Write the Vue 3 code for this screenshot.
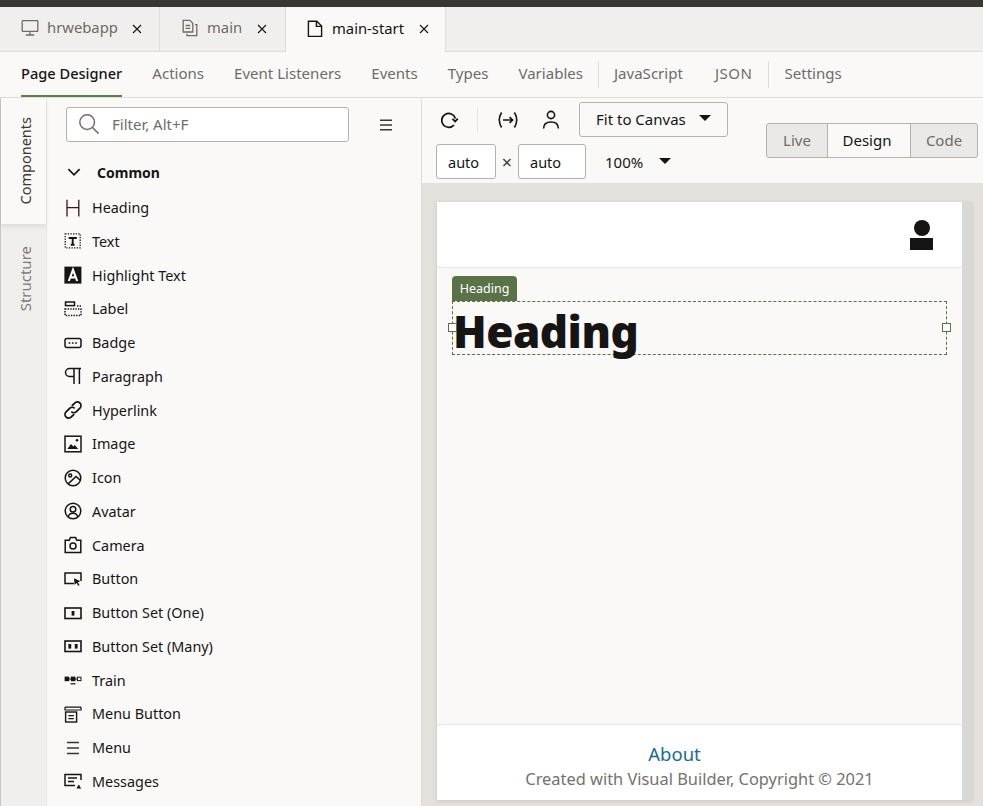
<template>
  <div class="app">
    <div class="top-strip"></div>

    <div class="tabs">
      <div v-for="tab in tabs" :key="tab.name" class="tab" :class="{ active: tab.active }" :style="{ width: tab.width + 'px' }">
        <svg v-if="tab.icon === 'desktop'" class="tab-icon" viewBox="0 0 18 18" fill="none" stroke="currentColor" stroke-width="1.3">
          <rect x="1.2" y="1.7" width="15.6" height="10.6" rx="0.6" />
          <path d="M9 12.5v3.4M4.8 16h8.4" />
        </svg>
        <svg v-else-if="tab.icon === 'pages'" class="tab-icon" viewBox="0 0 18 18" fill="none" stroke="currentColor" stroke-width="1.3">
          <path d="M2.2 13V1.3h6.6l3 3V13z" />
          <path d="M4.6 6.5h4.6M4.6 9.3h4.6" />
          <path d="M14 5.6h1.8v11H6v-1.8" />
        </svg>
        <svg v-else class="tab-icon" viewBox="0 0 18 18" fill="none" stroke="#161513" stroke-width="1.4">
          <path d="M2.4 16.4V1.2h8.4l4.8 4.8v10.4z" />
          <path d="M10.4 1.2v5.2h5.2" />
        </svg>
        <span class="tab-name">{{ tab.name }}</span>
        <svg class="tab-close" viewBox="0 0 10 10" stroke="#161513" stroke-width="1.1"><path d="M1 1l8 8M9 1l-8 8" /></svg>
      </div>
      <div class="tabs-rest"></div>
    </div>

    <nav class="subnav">
      <template v-for="item in navItems" :key="item.label">
        <span v-if="item.sep" class="nav-sep"></span>
        <span class="nav-item" :class="{ current: item.current, caps: item.caps }">{{ item.label }}</span>
      </template>
    </nav>

    <div class="workspace">
      <aside class="rail">
        <div class="rail-tab on"><span>Components</span></div>
        <div class="rail-tab"><span>Structure</span></div>
      </aside>

      <section class="palette">
        <div class="filter-row">
          <div class="filter">
            <svg class="search-icon" viewBox="0 0 24 24" fill="none" stroke="#6f6b66" stroke-width="1.6">
              <circle cx="10" cy="10" r="8" />
              <path d="M16 16l6.5 6.5" />
            </svg>
            <span>Filter, Alt+F</span>
          </div>
          <svg class="list-icon" viewBox="0 0 12 12" stroke="#3a3632" stroke-width="1.4"><path d="M0 1.2h12M0 6h12M0 10.8h12" /></svg>
        </div>
        <div class="group-title">
          <svg viewBox="0 0 12 8" fill="none" stroke="#161513" stroke-width="1.5"><path d="M1 1l5 5 5-5" /></svg>
          <span>Common</span>
        </div>
        <ul class="items">
          <li v-for="c in components" :key="c.name">
            <svg class="item-icon" viewBox="0 0 18 18" fill="none" stroke="#161513" stroke-width="1.5" v-html="c.svg"></svg>
            <span>{{ c.name }}</span>
          </li>
        </ul>
      </section>

      <section class="designer">
        <div class="toolbar">
          <div class="tool-lines">
            <div class="tool-row">
              <svg class="tool" viewBox="0 0 20 20" fill="none" stroke="#161513" stroke-width="1.8">
                <path d="M16.4 8.4A7 7 0 1 0 15 15" />
                <path d="M18.8 8.6l-2.6 2.8-2.8-2.6" />
              </svg>
              <span class="tool-sep"></span>
              <svg class="tool wide" viewBox="0 0 22 20" fill="none" stroke="#161513" stroke-width="1.6">
                <path d="M4.6 2.5C1.8 7 1.8 13 4.6 17.5M17.4 2.5c2.8 4.5 2.8 10.5 0 15" />
                <path d="M6 10h9.5M12.6 7.2l3 2.8-3 2.8" />
              </svg>
              <svg class="tool person" viewBox="0 0 20 20" fill="none" stroke="#161513" stroke-width="1.6">
                <circle cx="10" cy="5" r="3.6" />
                <path d="M2.6 18.6c0-4.4 3-6.6 7.4-6.6s7.4 2.2 7.4 6.6" />
              </svg>
              <div class="fit-btn">Fit to Canvas<i class="caret"></i></div>
            </div>
            <div class="tool-row second">
              <div class="size-box first">auto</div>
              <span class="times">×</span>
              <div class="size-box">auto</div>
              <span class="zoom">100%</span><i class="caret"></i>
            </div>
          </div>
          <div class="modes">
            <span class="mode">Live</span>
            <span class="mode on">Design</span>
            <span class="mode">Code</span>
          </div>
        </div>

        <div class="canvas">
          <div class="page-wrap">
            <div class="page">
              <header class="page-head">
                <div class="avatar"><b></b><i></i></div>
              </header>
              <main class="page-body">
                <div class="sel-tag">Heading</div>
                <div class="sel-box">
                  <h1>Heading</h1>
                  <i class="handle left"></i>
                  <i class="handle right"></i>
                </div>
              </main>
              <footer class="page-foot">
                <div class="about">About</div>
                <div class="copy">Created with Visual Builder, Copyright © 2021</div>
              </footer>
            </div>
            <div class="page-scroll"></div>
          </div>
        </div>
      </section>
    </div>
  </div>
</template>

<script setup>
const tabs = [
  { name: "hrwebapp", icon: "desktop", width: 160 },
  { name: "main", icon: "pages", width: 126 },
  { name: "main-start", icon: "file", width: 160, active: true },
];

const navItems = [
  { label: "Page Designer", current: true },
  { label: "Actions" },
  { label: "Event Listeners" },
  { label: "Events" },
  { label: "Types" },
  { label: "Variables" },
  { label: "JavaScript", sep: true },
  { label: "JSON", caps: true },
  { label: "Settings", sep: true },
];

const components = [
  { name: "Heading", svg: '<path d="M3 .8v16.6M14.8 .8v16.6M3 8.6h11.8" stroke="#3a1513" stroke-width="1.3"/>' },
  { name: "Text", svg: '<rect x="1.2" y="1.8" width="15" height="14" stroke-dasharray="1.3 1.3" stroke-width="1.3"/><path d="M4.6 6h8.2M8.7 6v6.8M6.8 12.8h3.8" stroke-width="1.9"/>' },
  { name: "Highlight Text", svg: '<rect x=".4" y=".6" width="17" height="17" fill="#161513" stroke="none"/><path d="M4.8 15L9 3.8 13.2 15M6.2 11.4h5.6" stroke="#fff" stroke-width="2.1"/>' },
  { name: "Label", svg: '<rect x="1.5" y="2" width="9" height="3.6"/><rect x="1" y="9" width="16" height="6.5" stroke-dasharray="1.4 1.2"/><path d="M13 6h4" stroke-dasharray="1.4 1.2"/>' },
  { name: "Badge", svg: '<rect x="1" y="4.5" width="16" height="9" rx="2"/><path d="M4.6 9h9" stroke-dasharray="1.7 1.6"/>' },
  { name: "Paragraph", svg: '<path d="M10 1.5H5.5a4 4 0 0 0 0 8H10M10 1.5V17M15.4 1.5V17M9 1.5h8"/>' },
  { name: "Hyperlink", svg: '<g transform="translate(9 9) scale(1.2) translate(-9 -9)"><path d="M8 5.6l2.4-2.4a3 3 0 0 1 4.4 4.2l-3 3a3 3 0 0 1-4.2 0"/><path d="M10 12.4l-2.4 2.4a3 3 0 0 1-4.4-4.2l3-3a3 3 0 0 1 4.2 0"/></g>' },
  { name: "Image", svg: '<rect x="1" y="1.2" width="16" height="15.6"/><path d="M3.4 14l3.6-5 2.3 2.6 1.5-1.6 3.4 4z" fill="#161513" stroke="none"/><circle cx="13" cy="5.2" r="1.3" fill="#161513" stroke="none"/>' },
  { name: "Icon", svg: '<circle cx="9" cy="9" r="7.8"/><circle cx="6.2" cy="6.6" r="1.5"/><path d="M4.4 14.6L12 7.4l4.4 4"/>' },
  { name: "Avatar", svg: '<circle cx="9" cy="9" r="7.8"/><circle cx="9" cy="7.2" r="2.8"/><path d="M4.2 15c.6-2.6 2.4-3.8 4.8-3.8s4.2 1.2 4.8 3.8"/>' },
  { name: "Camera", svg: '<path d="M1.2 16.6V4.2h4l1.2-2.6h5.2l1.2 2.6h4v12.4z"/><circle cx="9" cy="10" r="3"/>' },
  { name: "Button", svg: '<path d="M10 13.5H1V3h16v8"/><path d="M10 8.2l6.4 3-2.6 1 1.8 3-1.4.6-1.6-2.8-2 1.8z" fill="#161513" stroke="none"/>' },
  { name: "Button Set (One)", svg: '<rect x="1" y="4" width="16" height="10.5" stroke-width="1.6"/><rect x="7.6" y="7" width="2.8" height="4.6" fill="#161513" stroke="none"/>' },
  { name: "Button Set (Many)", svg: '<rect x="1" y="4" width="16" height="10.5" stroke-width="1.6"/><rect x="4.4" y="7" width="2.8" height="4.6" fill="#161513" stroke="none"/><rect x="10.8" y="7" width="2.8" height="4.6" fill="#161513" stroke="none"/>' },
  { name: "Train", svg: '<rect x=".6" y="5.6" width="4.6" height="4.6" fill="#161513" stroke="none"/><rect x="6.8" y="5.6" width="4.6" height="4.6" fill="#161513" stroke="none"/><rect x="13.4" y="6.2" width="3.6" height="3.4" stroke-width="1"/><path d="M5 8h2M11 8h2.4" stroke-width="1"/><path d="M6.5 12.8h5" stroke-width="1.2"/>' },
  { name: "Menu Button", svg: '<path d="M1 2.2h16M1 2v3h16V2" stroke-width="1.2"/><rect x="1.6" y="7" width="11" height="10" stroke-width="1.4"/><path d="M4.4 10.6h5.4M4.4 13.6h5.4" stroke-width="1.2"/>' },
  { name: "Menu", svg: '<path d="M3 3.6h12M3 9h12M3 14.4h12" stroke="#3a3632"/>' },
  { name: "Messages", svg: '<path d="M17 8V2.6H1v11h10"/><path d="M4 6h9M4 9.4h6"/><path d="M14.8 12.4l2.4 4h-4.8z" fill="#161513" stroke="none"/>' },
];
</script>

<style scoped>
.app {
  width: 983px;
  height: 806px;
  display: flex;
  flex-direction: column;
  overflow: hidden;
  background: #fbf9f8;
  color: #161513;
  font-family: "Noto Sans", "Open Sans", sans-serif;
  font-size: 15px;
}

.top-strip {
  height: 7px;
  flex: none;
  background: #3a3632;
}

.tabs {
  height: 45px;
  flex: none;
  display: flex;
  background: #f1efed;
}

.tab {
  display: flex;
  align-items: center;
  padding-left: 21px;
  border-right: 1px solid #dedcd9;
  border-bottom: 1px solid #dedcd9;
  color: #6f6b66;
  box-sizing: border-box;
}

.tab.active {
  background: #fbf9f8;
  color: #161513;
  border-bottom: none;
  padding-left: 20px;
}

.tab-icon {
  width: 18px;
  height: 18px;
  flex: none;
  margin-right: 8px;
  margin-bottom: 2px;
}

.tab-name {
  flex: 1;
  margin-bottom: 4px;
  font-size: 14.8px;
}

.tab-close {
  width: 10px;
  height: 10px;
  flex: none;
  margin-right: 17px;
  margin-bottom: 1px;
}

.tab:nth-child(2) .tab-close {
  margin-right: 18px;
}

.tab.active .tab-close {
  margin-right: 16px;
}

.tabs-rest {
  flex: 1;
  border-bottom: 1px solid #dedcd9;
}

.subnav {
  height: 46px;
  flex: none;
  box-sizing: border-box;
  display: flex;
  align-items: center;
  padding-left: 21px;
  border-bottom: 1px solid #dedcd9;
  color: #6f6b66;
  font-size: 15.05px;
}

.nav-item {
  margin-right: 30px;
  height: 45px;
  line-height: 43px;
  box-sizing: border-box;
}

.nav-item.current {
  color: #161513;
  font-size: 14.6px;
  font-weight: 500;
  border-bottom: 2px solid #5f7d4f;
}

.nav-item.caps {
  margin-left: 2px;
  margin-right: 31px;
  letter-spacing: 0.5px;
}

.nav-sep {
  width: 1px;
  height: 27px;
  background: #dedcd9;
  margin-left: -15px;
  margin-right: 15px;
}

.workspace {
  flex: 1;
  display: flex;
  min-height: 0;
}

.rail {
  width: 47px;
  flex: none;
  box-sizing: border-box;
  background: #f1efed;
  border-left: 1px solid #c9c7c5;
  border-right: 1px solid #e8e6e3;
}

.rail-tab {
  height: 110px;
  display: flex;
  align-items: center;
  justify-content: center;
  padding-left: 3px;
  color: #7f7b77;
}

.rail-tab span {
  writing-mode: vertical-rl;
  transform: rotate(180deg);
}

.rail-tab.on {
  height: 126px;
  background: #fbf9f8;
  color: #3a3632;
  font-size: 14.5px;
  box-shadow: 0 3px 5px rgba(0, 0, 0, 0.08);
}

.palette {
  width: 375px;
  flex: none;
  box-sizing: border-box;
  border-right: 1px solid #dedcd9;
  padding: 9px 0 0 19px;
  overflow: hidden;
}

.filter-row {
  display: flex;
  align-items: center;
}

.filter {
  width: 283px;
  height: 35px;
  box-sizing: border-box;
  display: flex;
  align-items: center;
  padding-left: 11px;
  padding-bottom: 2px;
  background: #fff;
  border: 1px solid #b5b2ae;
  border-radius: 3px;
  color: #6f6b66;
}

.search-icon {
  width: 22px;
  height: 22px;
  margin-right: 12px;
}

.list-icon {
  width: 12px;
  height: 12px;
  margin-left: 31px;
}

.group-title {
  display: flex;
  align-items: center;
  height: 22px;
  margin-top: 19px;
  font-size: 14px;
  font-weight: 700;
}

.group-title svg {
  width: 14px;
  height: 9px;
  margin-left: 1px;
  margin-right: 16px;
}

.items {
  list-style: none;
  margin: 7.8px 0 0;
  padding: 0;
  font-size: 14.4px;
}

.items li {
  height: 33.75px;
  display: flex;
  align-items: center;
}

.item-icon {
  width: 18px;
  height: 18px;
  flex: none;
  margin-left: -2px;
  margin-right: 10px;
}

.designer {
  flex: 1;
  min-width: 0;
  display: flex;
  flex-direction: column;
}

.toolbar {
  height: 85px;
  flex: none;
  display: flex;
  padding-left: 14px;
  box-sizing: border-box;
}

.tool-row {
  display: flex;
  align-items: center;
  height: 35px;
  margin-top: 4px;
}

.tool-row.second {
  margin-top: 7px;
}

.tool {
  width: 20px;
  height: 20px;
  flex: none;
  margin-left: 3px;
}

.tool.wide {
  width: 22px;
  margin-left: 19px;
}

.tool.person {
  margin-left: 22px;
  margin-right: 18px;
  width: 20px;
}

.tool-sep {
  width: 1px;
  height: 26px;
  background: #e8e6e3;
  margin-left: 18px;
}

.fit-btn {
  width: 149px;
  height: 35px;
  box-sizing: border-box;
  display: flex;
  align-items: center;
  padding-left: 16px;
  padding-bottom: 2px;
  border: 1px solid #b5b2ae;
  border-radius: 3px;
}

.caret {
  width: 0;
  height: 0;
  border-left: 6px solid transparent;
  border-right: 6px solid transparent;
  border-top: 6px solid #161513;
  margin-left: 13px;
  margin-bottom: 2px;
}

.size-box {
  width: 68px;
  height: 35px;
  box-sizing: border-box;
  display: flex;
  align-items: center;
  padding-left: 11px;
  font-size: 14.5px;
  background: #fff;
  border: 1px solid #b5b2ae;
  border-radius: 3px;
}

.size-box.first {
  width: 60px;
}

.times {
  width: 22px;
  text-align: center;
  font-size: 18px;
  line-height: 20px;
  color: #3a3632;
}

.zoom {
  margin-left: 19px;
  margin-top: 1px;
}

.zoom + .caret {
  margin-left: 16px;
}

.modes {
  width: 212px;
  height: 35px;
  margin-left: 38px;
  margin-top: 25px;
  box-sizing: border-box;
  display: flex;
  border: 1px solid #b5b2ae;
  border-radius: 3px;
  background: #ebe9e7;
  color: #6f6b66;
}

.mode {
  width: 60px;
  display: flex;
  align-items: center;
  justify-content: center;
  padding-bottom: 1px;
}

.mode:last-child {
  flex: 1;
}

.mode.on {
  width: 84px;
  padding-right: 4px;
  box-sizing: border-box;
  background: #fbf9f8;
  color: #161513;
  border-left: 1px solid #b5b2ae;
  border-right: 1px solid #b5b2ae;
}

.canvas {
  flex: 1;
  min-height: 0;
  background: #e4e1dc;
  padding: 19px 0 6px 15px;
}

.page-wrap {
  width: 535px;
  height: 100%;
  display: flex;
  box-shadow: 0 1px 4px rgba(0, 0, 0, 0.12);
}

.page {
  width: 525px;
  display: flex;
  flex-direction: column;
  background: #fff;
}

.page-scroll {
  width: 10px;
  background: #d9d8d4;
}

.page-head {
  height: 66px;
  flex: none;
  box-sizing: border-box;
  border-bottom: 1px solid #e8e6e3;
  display: flex;
  justify-content: flex-end;
  padding: 18px 29px 0 0;
}

.avatar {
  width: 23px;
  display: flex;
  flex-direction: column;
  align-items: center;
}

.avatar b {
  width: 16px;
  height: 16px;
  border-radius: 50%;
  background: #161513;
}

.avatar i {
  width: 23px;
  height: 12px;
  margin-top: 2px;
  background: #161513;
}

.page-body {
  flex: 1;
  background: #fbf9f8;
  padding: 8px 15px 0;
}

.sel-tag {
  width: 65px;
  height: 25px;
  box-sizing: border-box;
  background: #5a7248;
  color: #fff;
  font-size: 12.5px;
  line-height: 25px;
  text-align: center;
  border-radius: 4px 4px 0 0;
}

.sel-box {
  position: relative;
  height: 54px;
  box-sizing: border-box;
  border: 1px dashed #5a7248;
}

.sel-box h1 {
  margin: 0;
  font-size: 44px;
  letter-spacing: -0.5px;
  line-height: 58px;
  font-weight: 900;
  color: #161513;
}

.handle {
  position: absolute;
  top: 21px;
  width: 7px;
  height: 7px;
  background: #fff;
  border: 1px solid #5a7248;
}

.handle.left {
  left: -5px;
}

.handle.right {
  right: -5px;
}

.page-foot {
  height: 76px;
  flex: none;
  box-sizing: border-box;
  border-top: 1px solid #e8e6e3;
  text-align: center;
  padding-top: 16px;
}

.about {
  font-size: 18.5px;
  line-height: 26px;
  color: #1c6a8f;
  margin-right: 50px;
}

.copy {
  font-size: 16.4px;
  line-height: 24px;
  color: #75716c;
}
</style>
